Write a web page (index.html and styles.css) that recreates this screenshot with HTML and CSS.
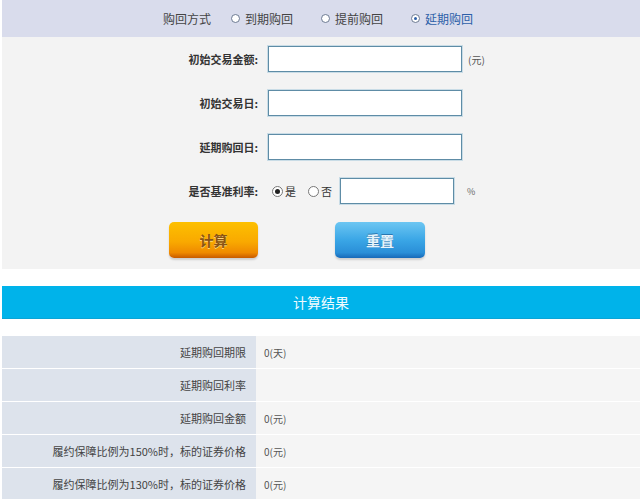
FILE: index.html
```html
<!DOCTYPE html>
<html lang="zh">
<head>
<meta charset="utf-8">
<link rel="stylesheet" href="styles.css">
</head>
<body>
<div class="page">
  <div class="modebar">
    <span class="mode-title">购回方式</span>
    <span class="opt"><span class="radio"></span>到期购回</span>
    <span class="opt"><span class="radio"></span>提前购回</span>
    <span class="opt sel"><span class="radio on"></span>延期购回</span>
  </div>
  <div class="form">
    <div class="row">
      <label class="lbl">初始交易金额:</label>
      <span class="inp"></span>
      <span class="unit">(元)</span>
    </div>
    <div class="row">
      <label class="lbl">初始交易日:</label>
      <span class="inp"></span>
    </div>
    <div class="row">
      <label class="lbl">延期购回日:</label>
      <span class="inp"></span>
    </div>
    <div class="row">
      <label class="lbl">是否基准利率:</label>
      <span class="choice"><span class="rb on"></span>是</span>
      <span class="choice"><span class="rb"></span>否</span>
      <span class="inp small"></span>
      <span class="pct">%</span>
    </div>
    <div class="buttons">
      <span class="btn calc">计算</span>
      <span class="btn reset">重置</span>
    </div>
  </div>
  <div class="result-title">计算结果</div>
  <div class="table">
    <div class="tr"><div class="th">延期购回期限</div><div class="td">0(天)</div></div>
    <div class="tr"><div class="th">延期购回利率</div><div class="td"></div></div>
    <div class="tr"><div class="th">延期购回金额</div><div class="td">0(元)</div></div>
    <div class="tr"><div class="th">履约保障比例为150%时，标的证券价格</div><div class="td">0(元)</div></div>
    <div class="tr"><div class="th">履约保障比例为130%时，标的证券价格</div><div class="td">0(元)</div></div>
  </div>
</div>
</body>
</html>
```
FILE: styles.css
```css
* { box-sizing: border-box; }
html, body { margin: 0; padding: 0; background: #fff; }
body {
  font-family: "Noto Sans CJK SC", "Liberation Sans", sans-serif;
  color: #333;
  overflow: hidden;
}
.page { padding-left: 2px; width: 640px; }

.modebar {
  height: 37px;
  background: #d9dcec;
  display: flex;
  align-items: center;
  padding-left: 161px;
  font-size: 12px;
  color: #444;
}
.mode-title { margin-right: 20px; }
.opt { display: flex; align-items: center; margin-right: 28px; }
.opt.sel { color: #2c5fa8; }
.radio {
  width: 9px; height: 9px;
  border: 1px solid #6c7a92;
  border-radius: 50%;
  background: #fff;
  margin-right: 5px;
  position: relative;
}
.radio.on::after {
  content: ""; position: absolute; left: 2px; top: 2px;
  width: 3px; height: 3px; border-radius: 50%; background: #2c5fa8;
}

.form {
  background: #f3f3f3;
  padding: 9px 0 11px;
  display: flex;
  flex-direction: column;
  gap: 18px;
}
.row { display: flex; align-items: center; height: 26px; }
.lbl {
  width: 256px;
  text-align: right;
  font-size: 11px;
  font-weight: bold;
  color: #333;
  margin-right: 10px;
}
.inp {
  width: 194px; height: 26px;
  background: #fff;
  border: 1px solid #5e8ca6;
  box-shadow: 0 0 0 1px #c9dce6;
}
.inp.small { width: 114px; margin-left: 8px; }
.unit { margin-left: 6px; font-size: 10px; color: #555; }
.pct { margin-left: 13px; font-size: 9px; color: #666; }
.choice { display: flex; align-items: center; font-size: 11px; margin-left: 4px; margin-right: 8px; }
.choice + .choice { margin-left: 4px; margin-right: 0; }
.rb {
  width: 11px; height: 11px; border-radius: 50%;
  border: 1px solid #777; background: #fff; margin-right: 2px; position: relative;
}
.rb.on::after {
  content: ""; position: absolute; left: 2px; top: 2px;
  width: 5px; height: 5px; border-radius: 50%; background: #222;
}

.buttons { display: flex; padding-left: 167px; gap: 77px; height: 36px; }
.btn {
  width: 89px; height: 36px;
  border-radius: 5px;
  display: flex; align-items: center; justify-content: center;
  font-size: 14px; font-weight: bold;
  box-shadow: 0 2px 2px rgba(0,0,0,0.15);
}
.btn.calc {
  background: linear-gradient(#fdc000 0%, #f9a900 55%, #ef8a00 85%, #c85a00 100%);
  color: #8a5414;
  text-shadow: 0 1px 0 #ffd77a;
}
.btn.reset {
  width: 90px;
  background: linear-gradient(#6cc6f2 0%, #3aa6e6 50%, #2a8fd8 85%, #1769b8 100%);
  color: #e8f4fb;
  text-shadow: 0 -1px 0 #2a77b0;
}

.result-title {
  margin-top: 17px;
  height: 33px;
  background: #00b3ea;
  color: #f0fbff;
  font-size: 14px;
  display: flex; align-items: center; justify-content: center;
  border-bottom: 1px solid #0aa4d6;
}
.table { margin-top: 17px; }
.tr { display: flex; height: 33px; border-bottom: 1px solid #fff; }
.th {
  width: 254px; background: #dde3ec;
  display: flex; align-items: center; justify-content: flex-end;
  padding-right: 10px; font-size: 11px; color: #444;
}
.td {
  flex: 1; background: #f5f5f5;
  display: flex; align-items: center; padding-left: 8px;
  font-size: 10px; color: #555;
}
```
